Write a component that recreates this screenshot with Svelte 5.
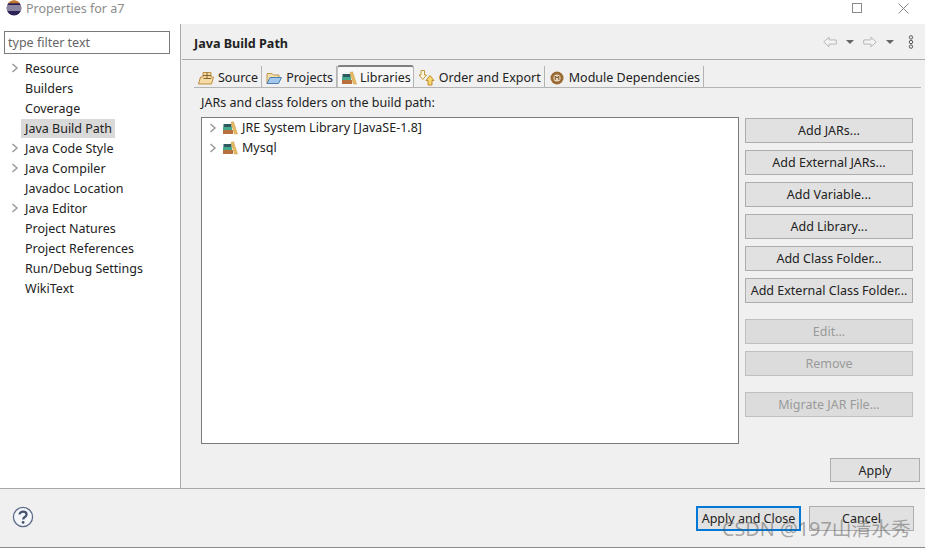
<script>
	const nav = [
		{ label: 'Resource', arrow: true },
		{ label: 'Builders' },
		{ label: 'Coverage' },
		{ label: 'Java Build Path', selected: true },
		{ label: 'Java Code Style', arrow: true },
		{ label: 'Java Compiler', arrow: true },
		{ label: 'Javadoc Location' },
		{ label: 'Java Editor', arrow: true },
		{ label: 'Project Natures' },
		{ label: 'Project References' },
		{ label: 'Run/Debug Settings' },
		{ label: 'WikiText' }
	];

	const tabs = [
		{ label: 'Source', icon: 'source' },
		{ label: 'Projects', icon: 'projects' },
		{ label: 'Libraries', icon: 'books', active: true },
		{ label: 'Order and Export', icon: 'order' },
		{ label: 'Module Dependencies', icon: 'module' }
	];

	const groups = [
		[
			{ label: 'Add JARs...' },
			{ label: 'Add External JARs...' },
			{ label: 'Add Variable...' },
			{ label: 'Add Library...' },
			{ label: 'Add Class Folder...' },
			{ label: 'Add External Class Folder...' }
		],
		[
			{ label: 'Edit...', disabled: true },
			{ label: 'Remove', disabled: true }
		],
		[{ label: 'Migrate JAR File...', disabled: true }]
	];
</script>

{#snippet chevron()}
	<svg class="chevron" width="8" height="10" viewBox="0 0 8 10">
		<path d="M1.5 1 L6 5 L1.5 9" fill="none" stroke="#9a9a9a" stroke-width="1.5" />
	</svg>
{/snippet}

{#snippet books()}
	<svg width="16" height="14" viewBox="0 0 16 14">
		<rect x="1.5" y="3" width="8" height="3" fill="#2c5a5e" />
		<rect x="1" y="6" width="9" height="3" fill="#46a98e" />
		<rect x="1" y="9" width="10" height="4" fill="#b9703f" />
		<path d="M9 1.5 L11.5 0.8 L15.5 13 L12.5 13 Z" fill="#e8bb62" stroke="#c9963f" stroke-width="0.5" />
	</svg>
{/snippet}

{#snippet tabIcon(name)}
	{#if name === 'books'}
		{@render books()}
	{:else if name === 'source'}
		<svg width="16" height="14" viewBox="0 0 16 14">
			<path d="M0.5 13 L2.5 6 L5 6 L5 1.5 L13 1.5 L13 6 L15.5 6 L13.5 13 Z" fill="#f6dca4" stroke="#bd8d40" />
			<path d="M5 4.5 H13 M9 1.5 V7.5 M5.5 7.5 H13" stroke="#85642c" fill="none" />
		</svg>
	{:else if name === 'projects'}
		<svg width="16" height="14" viewBox="0 0 16 14">
			<path d="M1 12.5 V2.5 H6 L7.5 4 H13 V6.5" fill="#f3dfa8" stroke="#b99a50" />
			<path d="M1 12.5 L4 6.5 H15.5 L12.5 12.5 Z" fill="#a3c8ec" stroke="#4f7fb0" />
		</svg>
	{:else if name === 'order'}
		<svg width="17" height="16" viewBox="0 0 17 16">
			<path d="M3 0.5 H6.5 V5 H8.5 L4.8 9.5 L1 5 H3 Z" fill="#fff8e0" stroke="#bf9a3c" />
			<path d="M12 5.5 L16 10.5 H14 V15 H10 V10.5 H8 Z" fill="#f8d870" stroke="#c08a2a" />
		</svg>
	{:else}
		<svg class="module-icon" width="14" height="14" viewBox="0 0 14 14">
			<circle cx="7" cy="7" r="6.5" fill="#9a6a32" />
			<circle cx="7" cy="7" r="3.6" fill="#e9d9bd" />
			<path d="M5.2 9 V5 L7 7 L8.8 5 V9" fill="none" stroke="#7a4f20" stroke-width="1" />
		</svg>
	{/if}
{/snippet}

<div class="window">
	<header class="titlebar">
		<svg class="logo" width="16" height="16" viewBox="0 0 16 16">
			<circle cx="8" cy="8" r="7.5" fill="#2c2255" />
			<path d="M0.5 6 H15.5 M0.5 8 H15.5 M0.5 10 H15.5" stroke="#fff" stroke-width="0.9" />
			<path d="M2 3.2 A7.5 7.5 0 0 1 14 3.2 Z" fill="#f7941e" opacity="0.75" />
		</svg>
		<span class="title">Properties for a7</span>
		<div class="window-controls">
			<svg width="11" height="11" viewBox="0 0 11 11">
				<rect x="0.5" y="0.5" width="9" height="9" fill="none" stroke="#8a8a8a" />
			</svg>
			<svg width="11" height="11" viewBox="0 0 11 11">
				<path d="M0.5 0.5 L10.5 10.5 M10.5 0.5 L0.5 10.5" stroke="#8a8a8a" fill="none" />
			</svg>
		</div>
	</header>

	<div class="main">
		<aside class="sidebar">
			<input class="filter" type="text" value="type filter text" />
			<ul class="nav">
				{#each nav as item}
					<li class="nav-row">
						<span class="arrow-slot">
							{#if item.arrow}{@render chevron()}{/if}
						</span>
						<span class="nav-label" class:selected={item.selected}>{item.label}</span>
					</li>
				{/each}
			</ul>
		</aside>

		<section class="content">
			<div class="page-header">
				<h1>Java Build Path</h1>
				<div class="history">
					<svg width="14" height="12" viewBox="0 0 15 12">
						<path d="M0.8 6 L6.5 0.8 V3.8 H14.2 V8.2 H6.5 V11.2 Z" fill="#f4f4f4" stroke="#b4b4b4" />
					</svg>
					<span class="drop"></span>
					<svg width="14" height="12" viewBox="0 0 15 12">
						<path d="M14.2 6 L8.5 0.8 V3.8 H0.8 V8.2 H8.5 V11.2 Z" fill="#f4f4f4" stroke="#b4b4b4" />
					</svg>
					<span class="drop"></span>
					<svg class="dots" width="6" height="14" viewBox="0 0 6 14">
						<circle cx="3" cy="2.4" r="1.7" fill="none" stroke="#555" />
						<circle cx="3" cy="7" r="1.7" fill="none" stroke="#555" />
						<circle cx="3" cy="11.6" r="1.7" fill="none" stroke="#555" />
					</svg>
				</div>
			</div>

			<div class="page-body">
				<div class="tabs">
					{#each tabs as tab}
						<div class="tab" class:active={tab.active}>
							{@render tabIcon(tab.icon)}
							<span>{tab.label}</span>
						</div>
					{/each}
				</div>

				<p class="caption">JARs and class folders on the build path:</p>

				<div class="panel">
					<div class="tree">
						<div class="tree-row">
							{@render chevron()}
							{@render books()}
							<span>JRE System Library [JavaSE-1.8]</span>
						</div>
						<div class="tree-row">
							{@render chevron()}
							{@render books()}
							<span>Mysql</span>
						</div>
					</div>

					<div class="actions">
						{#each groups as group}
							<div class="action-group">
								{#each group as button}
									<button type="button" class="btn" disabled={button.disabled}>{button.label}</button>
								{/each}
							</div>
						{/each}
					</div>
				</div>

				<div class="apply-row">
					<button type="button" class="btn apply">Apply</button>
				</div>
			</div>
		</section>
	</div>

	<footer class="footer">
		<svg width="22" height="22" viewBox="0 0 22 22">
			<circle cx="11" cy="11" r="9.6" fill="#f4f6fa" stroke="#5d6c88" stroke-width="1.3" />
			<path d="M7.6 8.6 C7.6 4.6 14.6 4.8 14.6 8.6 C14.6 11 11.2 11 11.2 13.4" fill="none" stroke="#46546f" stroke-width="2.2" />
			<circle cx="11.1" cy="16.4" r="1.4" fill="#46546f" />
		</svg>
		<div class="footer-buttons">
			<button type="button" class="btn footer-btn primary">Apply and Close</button>
			<button type="button" class="btn footer-btn">Cancel</button>
		</div>
	</footer>
	<div class="bottom-edge"></div>

	<div class="watermark">CSDN @197山清水秀</div>
</div>

<style>
	:global(body) {
		margin: 0;
	}

	.window {
		position: relative;
		width: 925px;
		height: 548px;
		display: flex;
		flex-direction: column;
		overflow: hidden;
		background: #fff;
		color: #222;
		font-family: 'Noto Sans', 'Noto Sans CJK SC', sans-serif;
		font-size: 12.5px;
	}

	.titlebar {
		height: 24px;
		flex: none;
		display: flex;
		align-items: flex-start;
		padding: 0 16px 0 6px;
		box-sizing: border-box;
	}

	.logo {
		margin: 0 4px 0 0;
	}

	.title {
		color: #8c8c8c;
		line-height: 17px;
	}

	.window-controls {
		margin-left: auto;
		display: flex;
		gap: 35px;
		padding-top: 3px;
	}

	.main {
		height: 464px;
		flex: none;
		display: flex;
	}

	.sidebar {
		width: 181px;
		flex: none;
		box-sizing: border-box;
		border-right: 1px solid #a8a8a8;
		padding: 7px 10px 0 4px;
	}

	.filter {
		display: block;
		width: 166px;
		height: 23px;
		box-sizing: border-box;
		border: 1px solid #7a7a7a;
		padding: 0 3px;
		font: inherit;
		color: #666;
		outline: none;
	}

	.nav {
		list-style: none;
		margin: 4px 0 0;
		padding: 0;
	}

	.nav-row {
		height: 20px;
		display: flex;
		align-items: center;
	}

	.arrow-slot {
		width: 17px;
		padding-left: 7px;
		box-sizing: border-box;
		flex: none;
		display: flex;
	}

	.nav-label {
		padding: 1px 3px 1px 4px;
		line-height: 17px;
	}

	.nav-label.selected {
		background: #d9d9d9;
	}

	.content {
		flex: 1;
		background: #f0f0f0;
		min-width: 0;
	}

	.page-header {
		height: 36px;
		box-sizing: border-box;
		border-bottom: 1px solid #a8a8a8;
		margin-left: 1px;
		display: flex;
		align-items: center;
		justify-content: space-between;
		padding: 1px 11px 0 12px;
	}

	h1 {
		margin: 2px 0 0;
		font-size: 12.6px;
		font-weight: 700;
		color: #222;
	}

	.history {
		display: flex;
		align-items: center;
		gap: 9px;
	}

	.drop {
		width: 0;
		height: 0;
		border-left: 4px solid transparent;
		border-right: 4px solid transparent;
		border-top: 4px solid #666;
	}

	.dots {
		margin-left: 5px;
	}

	.page-body {
		padding: 6px 4px 0 20px;
	}

	.tabs {
		display: flex;
		height: 22px;
		box-sizing: border-box;
		border-bottom: 1px solid #b4b4b4;
		margin-left: -7px;
	}

	.tab {
		height: 21px;
		box-sizing: border-box;
		display: flex;
		align-items: center;
		gap: 4px;
		padding: 2px 3px 0 4px;
		border-right: 1px solid #b4b4b4;
		white-space: nowrap;
	}

	.tab.active {
		background: #f7f7f7;
		border-top: 2px solid #808080;
		border-left: 1px solid #c4c4c4;
		border-radius: 3px 3px 0 0;
		height: 22px;
		margin-top: -1px;
		margin-bottom: -1px;
		gap: 3px;
		padding: 1px 2px 0 3px;
	}

	.module-icon {
		margin: 0 1px;
	}

	.caption {
		margin: 0;
		height: 29px;
		line-height: 30px;
	}

	.panel {
		display: flex;
		align-items: flex-start;
		gap: 6px;
	}

	.tree {
		width: 538px;
		height: 327px;
		flex: none;
		box-sizing: border-box;
		background: #fff;
		border: 1px solid #7a7a7a;
		padding: 0 0 0 7px;
	}

	.tree-row {
		height: 20px;
		box-sizing: border-box;
		padding-bottom: 1px;
		display: flex;
		align-items: center;
		gap: 4px;
	}

	.tree-row :global(.chevron) {
		margin-right: 1px;
	}

	.actions {
		display: flex;
		flex-direction: column;
		gap: 16px;
		padding-top: 1px;
	}

	.action-group {
		display: flex;
		flex-direction: column;
		gap: 7px;
	}

	.btn {
		width: 168px;
		height: 25px;
		box-sizing: border-box;
		background: #e1e1e1;
		border: 1px solid #adadad;
		padding: 0;
		font: inherit;
		color: #222;
	}

	.btn:disabled {
		color: #9a9a9a;
		background: #dcdcdc;
		border-color: #bfbfbf;
	}

	.apply-row {
		display: flex;
		justify-content: flex-end;
		margin: 14px 1px 0 0;
	}

	.btn.apply {
		width: 90px;
		height: 24px;
	}

	.footer {
		height: 59px;
		flex: none;
		box-sizing: border-box;
		background: #f0f0f0;
		border-top: 1px solid #a8a8a8;
		display: flex;
		align-items: flex-start;
		justify-content: space-between;
		padding: 17px 11px 0 12px;
	}

	.footer-buttons {
		display: flex;
		gap: 8px;
	}

	.footer-btn {
		width: 105px;
		height: 25px;
	}

	.footer-btn.primary {
		border: 2px solid #0078d7;
	}

	.bottom-edge {
		flex: 1;
		background: #8a8a8a;
	}

	.watermark {
		position: absolute;
		left: 722px;
		top: 515px;
		font-size: 19.8px;
		line-height: 27px;
		color: rgba(90, 90, 90, 0.5);
		white-space: nowrap;
		pointer-events: none;
	}
</style>
